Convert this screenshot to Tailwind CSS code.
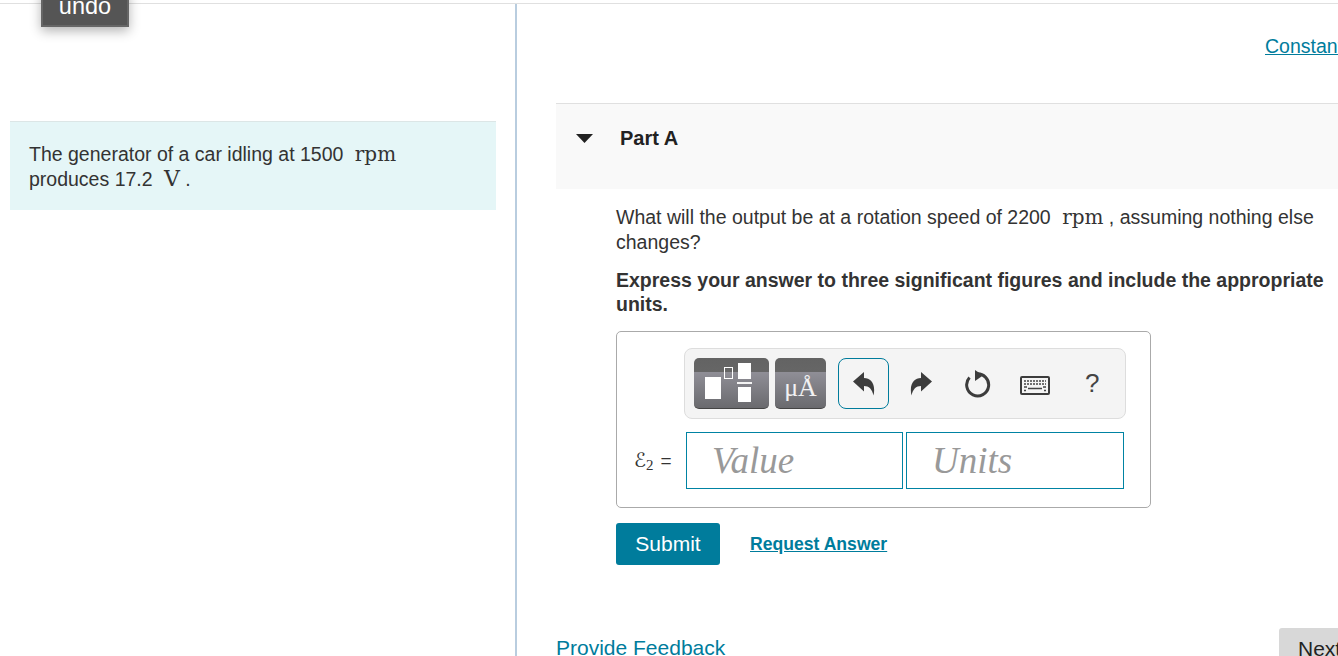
<!DOCTYPE html>
<html lang="en">
<head>
  <meta charset="UTF-8" />
  <title>Part A</title>
  <script src="https://cdn.jsdelivr.net/npm/@tailwindcss/browser@4"></script>
</head>
<body class="bg-white text-[#333] font-['Liberation_Sans',Arial,sans-serif] text-[19.5px] leading-[25px]">
  <div class="relative w-[1338px] h-[656px] overflow-hidden">
    <!-- undo -->
    <div class="absolute left-[41px] top-[-10px] z-10 w-[88px] h-[37px] bg-[#555] border-2 border-[#666] border-t-0 shadow-[0_4px_12px_rgba(0,0,0,0.3)] text-white text-[23.5px] leading-[32px] text-center">undo</div>

    <div class="mt-[3px] border-t border-[#e0e0e0] flex h-[653px]">
      <!-- left -->
      <div class="w-[517px] shrink-0 border-r-2 border-[#b9cddf] pl-[10px] pt-[117px]">
        <div class="w-[486px] h-[89px] bg-[#e5f6f7] border-t border-[#dce6e6] pl-[19px] pt-[20px]">
          The generator of a car idling at 1500 <span class="font-['DejaVu_Serif',serif] ml-[6px] text-[20px] leading-none">rpm</span><br />
          produces 17.2 <span class="font-['DejaVu_Serif',serif] ml-[6px] text-[22px] leading-none">V</span> .
        </div>
      </div>

      <!-- right -->
      <div class="flex-1 min-w-0 pl-[39px] relative">
        <div class="h-[99px] pt-[30px] pl-[709px] whitespace-nowrap">
          <a class="text-[#007c9c] underline">Constants</a>
        </div>
        <div class="h-[86px] bg-[#f9f9f9] border-t border-[#e0e0e0] flex items-start pt-[21px]">
          <svg class="ml-[20px] mt-[9px]" width="17" height="9" viewBox="0 0 17 9"><path d="M0 0h17L8.500 9z" fill="#222"/></svg>
          <span class="ml-[27px] font-bold text-[20px] leading-[27px] text-[#222]">Part A</span>
        </div>
        <div class="pl-[60px] pt-[16px] whitespace-nowrap">
          <p>What will the output be at a rotation speed of 2200 <span class="font-['DejaVu_Serif',serif] ml-[6px] text-[20px] leading-none">rpm</span> , assuming nothing else<br />changes?</p>
          <p class="font-bold mt-[13px] leading-[24px]">Express your answer to three significant figures and include the appropriate<br />units.</p>

          <div class="mt-[15px] w-[535px] h-[177px] border border-[#aaa] rounded-[5px] flex flex-col">
            <div class="ml-[67px] mt-[16px] w-[442px] h-[71px] bg-[#f4f4f4] border border-[#ddd] rounded-[8px] flex items-center pl-[9px]">
              <!-- templates -->
              <div class="relative w-[75px] h-[51px] rounded-[5px] border-b border-[#444] bg-[linear-gradient(#636363_0,#666_29%,#8f8e96_29%,#6a6a6e_100%)]">
                <div class="absolute left-[11px] top-[19px] w-[16px] h-[22px] bg-white"></div>
                <div class="absolute left-[30px] top-[9px] w-[9px] h-[12px] border border-white"></div>
                <div class="absolute left-[44px] top-[5px] w-[13px] h-[16px] bg-white"></div>
                <div class="absolute left-[43px] top-[24px] w-[15px] h-[2px] bg-white/90"></div>
                <div class="absolute left-[44px] top-[29px] w-[13px] h-[15px] bg-white"></div>
              </div>
              <!-- units -->
              <div class="ml-[6px] w-[51px] h-[51px] rounded-[5px] border-b border-[#444] bg-[linear-gradient(#636363_0,#666_29%,#8f8e96_29%,#6a6a6e_100%)] text-white/90 text-center font-['Liberation_Serif',serif] text-[26px] leading-[60px]">μÅ</div>
              <!-- undo -->
              <div class="ml-[12px] w-[51px] h-[51px] border border-[#007c9c] rounded-[8px] flex items-center justify-center">
                <svg width="22" height="24" viewBox="0 0 22 24"><path d="M0 9.500 11 0v6c7 0 12 6 9.500 17.500C19 17 16 14 11 14v5.500z" fill="#3c3c3c"/></svg>
              </div>
              <!-- redo -->
              <svg class="ml-[21px]" width="22" height="24" viewBox="0 0 22 24"><path d="M22 9.500 11 0v6C4 6-1 12 1.500 23.500 3 17 6 14 11 14v5.500z" fill="#3c3c3c"/></svg>
              <!-- reset -->
              <svg class="ml-[33px]" width="26" height="28" viewBox="0 0 26 28"><path d="M4.500 7.500A11 11 0 1 0 11 4" fill="none" stroke="#3c3c3c" stroke-width="3"/><path d="M10 0l8 5.500-8 5.500z" fill="#3c3c3c"/></svg>
              <!-- keyboard -->
              <svg class="ml-[29px] mt-[3px]" width="30" height="19" viewBox="0 0 30 19"><rect x="1" y="1" width="28" height="17" rx="1" fill="none" stroke="#3c3c3c" stroke-width="2"/><path d="M4 5h22M4 8h22" stroke="#444" stroke-width="1.500" stroke-dasharray="2 1"/><path d="M4 11h3M23 11h3M8 12.500h14M4 14.500h2M24 14.500h2" stroke="#444" stroke-width="1.500"/></svg>
              <div class="ml-[35px] text-[26px] text-[#444]">?</div>
            </div>
            <div class="flex items-center mt-[13px]">
              <div class="w-[69px] shrink-0 pl-[17px] whitespace-nowrap"><span class="font-['DejaVu_Sans',sans-serif] text-[20px] leading-none">ℰ</span><span class="text-[15px] font-['Liberation_Serif',serif] relative top-[3px] leading-none">2</span><span class="ml-[7px] text-[19px]">=</span></div>
              <div class="w-[217px] h-[57px] border border-[#0083a3] pl-[25px] font-['Liberation_Serif',serif] italic text-[37px] leading-[55px] text-[#999]">Value</div>
              <div class="ml-[3px] w-[218px] h-[57px] border border-[#0083a3] pl-[25px] font-['Liberation_Serif',serif] italic text-[37px] leading-[55px] text-[#999]">Units</div>
            </div>
          </div>

          <div class="mt-[15px] flex items-center">
            <div class="w-[104px] h-[42px] bg-[#007c9c] rounded-[3px] text-white text-[21px] leading-[42px] text-center">Submit</div>
            <a class="ml-[30px] font-bold text-[#007c9c] underline text-[17.600px]">Request Answer</a>
          </div>
        </div>
        <div class="absolute left-[39px] top-[631px] text-[#007c9c] text-[21px] whitespace-nowrap">Provide Feedback</div>
        <div class="absolute left-[762px] top-[624px] w-[70px] h-[40px] bg-[#d8d8d8] rounded-[3px] text-[21px] text-[#222] pl-[19px] pt-[8px]">Next</div>
      </div>
    </div>
  </div>
</body>
</html>
